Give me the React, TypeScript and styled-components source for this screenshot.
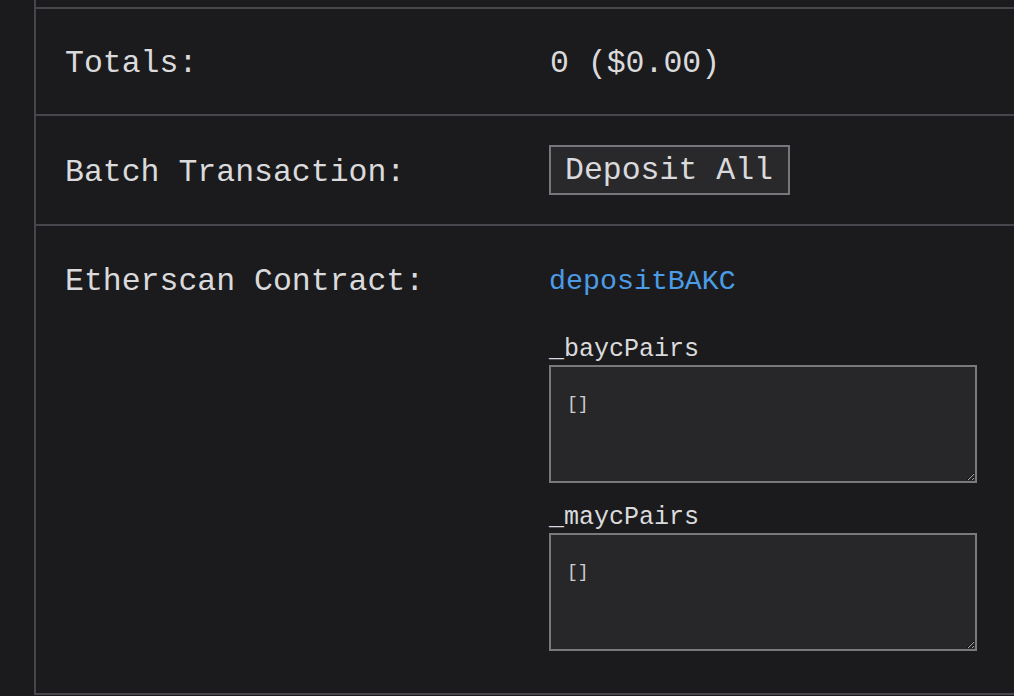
import React from "react";
import styled, { createGlobalStyle } from "styled-components";

const GlobalStyle = createGlobalStyle`
  html, body {
    margin: 0;
    padding: 0;
    background: #1b1b1d;
    color-scheme: dark;
  }
  body {
    font-family: "Liberation Mono", "Courier New", monospace;
    color: #dadadc;
    overflow: hidden;
  }
`;

const Page = styled.div`
  width: 1014px;
  height: 696px;
  padding-left: 34px;
  box-sizing: border-box;
  background: #1b1b1d;
  overflow: hidden;
`;

const Table = styled.div`
  border-left: 2px solid #47464c;
  border-bottom: 2px solid #47464c;
  width: 1100px;
`;

const PrevTail = styled.div`
  height: 7px;
`;

const Row = styled.div<{ $height?: number; $top?: boolean }>`
  display: grid;
  grid-template-columns: 513px 1fr;
  border-top: 2px solid #47464c;
  box-sizing: border-box;
  ${(p) => (p.$height ? `height: ${p.$height}px;` : "")}
  align-items: ${(p) => (p.$top ? "start" : "center")};
  padding: ${(p) => (p.$top ? "37px 0 42px" : "0")};
`;

const Label = styled.div<{ $shift?: boolean }>`
  padding-left: 29px;
  font-size: 31.5px;
  line-height: 37.8px;
  color: #dadadc;
  white-space: nowrap;
  margin-top: ${(p) => (p.$shift ? "5px" : "0")};
`;

const Value = styled.div<{ $shift?: boolean }>`
  font-size: 31.5px;
  line-height: 37.8px;
  color: #dadadc;
  white-space: nowrap;
  padding-left: 1px;
  margin-top: ${(p) => (p.$shift ? "5px" : "0")};
`;

const Button = styled.button`
  height: 50px;
  width: 241px;
  box-sizing: border-box;
  border: 2px solid #77767c;
  background: #29292c;
  color: #dadadc;
  font-family: "Liberation Mono", "Courier New", monospace;
  font-size: 31.5px;
  padding: 0 14px;
  text-align: left;
  cursor: pointer;
  border-radius: 0;
`;

const Column = styled.div`
  display: flex;
  flex-direction: column;
`;

const Link = styled.a`
  font-size: 28.3px;
  line-height: 37.8px;
  color: #4b9be6;
  text-decoration: none;
  margin-bottom: 34.5px;
`;

const Field = styled.div<{ $gap?: boolean }>`
  display: flex;
  flex-direction: column;
  margin-top: ${(p) => (p.$gap ? "20px" : "0")};
`;

const FieldLabel = styled.label`
  font-size: 25px;
  line-height: 30px;
  color: #dadadc;
`;

const TextArea = styled.textarea`
  width: 428px;
  height: 118px;
  box-sizing: border-box;
  border: 2px solid #79787d;
  background: #272729;
  color: #cfcfd1;
  font-family: "Liberation Mono", "Courier New", monospace;
  font-size: 18px;
  line-height: 22px;
  padding: 26px 16px;
  border-radius: 0;
  outline: none;
  resize: both;
`;

export default function App() {
  return (
    <>
      <GlobalStyle />
      <Page>
        <Table>
          <PrevTail />
          <Row $height={107}>
            <Label $shift>Totals:</Label>
            <Value $shift>0 ($0.00)</Value>
          </Row>
          <Row $height={110}>
            <Label $shift>Batch Transaction:</Label>
            <div>
              <Button>Deposit All</Button>
            </div>
          </Row>
          <Row $top>
            <Label>Etherscan Contract:</Label>
            <Column>
              <Link href="#">depositBAKC</Link>
              <Field>
                <FieldLabel>_baycPairs</FieldLabel>
                <TextArea defaultValue="[]" />
              </Field>
              <Field $gap>
                <FieldLabel>_maycPairs</FieldLabel>
                <TextArea defaultValue="[]" />
              </Field>
            </Column>
          </Row>
        </Table>
      </Page>
    </>
  );
}
